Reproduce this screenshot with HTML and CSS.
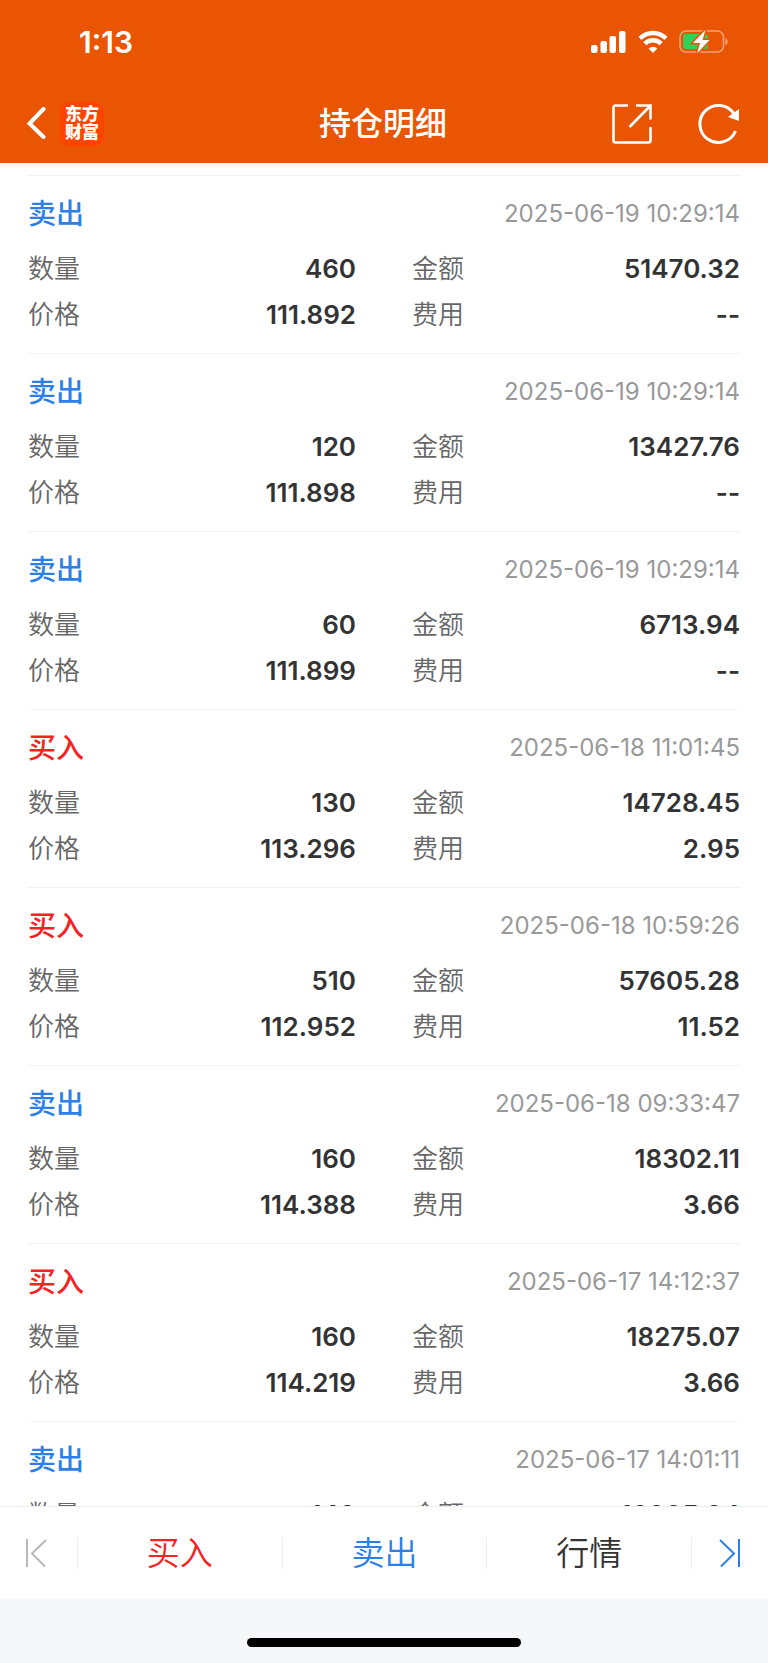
FILE: index.html
```html
<!DOCTYPE html>
<html lang="zh-CN">
<head>
    <meta charset="UTF-8">
    <meta name="viewport" content="width=device-width, initial-scale=1.0">
    <title>持仓明细</title>
    <link rel="stylesheet" href="styles.css">
</head>
<body>

    <header>
        <div class="status-bar">
            <span class="time">1:13</span>
            <div class="status-icons">
                <svg width="36" height="24" viewBox="0 0 36 24" fill="#fff">
                    <rect x="0" y="15" width="6.500" height="8" rx="2"/>
                    <rect x="9.500" y="11" width="6.500" height="12" rx="2"/>
                    <rect x="18.500" y="6" width="6.500" height="17" rx="2"/>
                    <rect x="28" y="1" width="6.500" height="22" rx="2"/>
                </svg>
                <svg width="30" height="24" viewBox="0 0 30 24" fill="none" stroke="#fff" stroke-width="4.4">
                    <path d="M2 8.4a18.4 18.4 0 0 1 26 0"/>
                    <path d="M6.8 13.6a11.6 11.6 0 0 1 16.4 0"/>
                    <path d="M15 23l-4.4-4.5a6.2 6.2 0 0 1 8.8 0z" fill="#fff" stroke="none"/>
                </svg>
                <svg width="50" height="26" viewBox="0 0 50 26">
                    <rect x="1" y="2" width="43.500" height="21" rx="6" fill="none" stroke="#fff" stroke-opacity=".45" stroke-width="1.6"/>
                    <path d="M46.500 9c2.800 1.200 2.800 6 0 7.200z" fill="#fff" fill-opacity=".5"/>
                    <rect x="4" y="5" width="25" height="15" rx="3" fill="#30d158"/>
                    <path d="M26.500 .8L14 14h7L18 24.400 30.500 11h-7z" fill="#fff" stroke="#ea5504" stroke-width="3" paint-order="stroke"/>
                </svg>
            </div>
        </div>
        <nav class="nav-bar">
            <div class="nav-side">
                <button type="button" class="icon-btn" aria-label="返回">
                    <svg width="20" height="34" viewBox="0 0 20 34" fill="none" stroke="#fff" stroke-width="4" stroke-linecap="round">
                        <path d="M17.500 2L3.500 16.500 17.500 30"/>
                    </svg>
                </button>
                <a href="#" class="logo">东方<br>财富</a>
            </div>
            <h1>持仓明细</h1>
            <div class="nav-side nav-right">
                <button type="button" class="icon-btn" aria-label="分享">
                    <svg width="40" height="40" viewBox="0 0 40 40" fill="none" stroke="#fff" stroke-width="2.600">
                        <path d="M16 1.500H3.500a2 2 0 0 0-2 2v33a2 2 0 0 0 2 2h33a2 2 0 0 0 2-2V23"/>
                        <path d="M24 1.500h14.500V15.500M38 2L17.500 23"/>
                    </svg>
                </button>
                <button type="button" class="icon-btn" aria-label="刷新">
                    <svg width="42" height="42" viewBox="0 0 42 42" fill="none" stroke="#fff" stroke-width="3">
                        <path d="M36 11A18.500 18.500 0 1 0 37.500 28"/>
                        <path d="M41 6v12l-11-4z" fill="#fff" stroke="none"/>
                    </svg>
                </button>
            </div>
        </nav>
    </header>

    <main id="tradeList" class="trade-list"></main>

    <footer>
        <div class="toolbar">
            <button type="button" class="side side-prev" aria-label="上一个">
                <svg width="24" height="30" viewBox="0 0 24 30" fill="none" stroke="#b8b8b8" stroke-width="2">
                    <path d="M3 1v28M22 2L8 15.500 21 28.500"/>
                </svg>
            </button>
            <button type="button" class="buy">买入</button>
            <button type="button" class="sell">卖出</button>
            <button type="button">行情</button>
            <button type="button" class="side" aria-label="下一个">
                <svg width="24" height="30" viewBox="0 0 24 30" fill="none" stroke="#2b7fe8" stroke-width="2">
                    <path d="M21 1v28M2 2l14 13.500L3 28.500"/>
                </svg>
            </button>
        </div>
        <div class="home-area">
            <div class="home-indicator"></div>
        </div>
    </footer>

    <script>
        const trades = [
            { type: 'sell', time: '2025-06-19 10:29:14', count: '460', amount: '51470.32', price: '111.892', fee: '--' },
            { type: 'sell', time: '2025-06-19 10:29:14', count: '120', amount: '13427.76', price: '111.898', fee: '--' },
            { type: 'sell', time: '2025-06-19 10:29:14', count: '60', amount: '6713.94', price: '111.899', fee: '--' },
            { type: 'buy', time: '2025-06-18 11:01:45', count: '130', amount: '14728.45', price: '113.296', fee: '2.95' },
            { type: 'buy', time: '2025-06-18 10:59:26', count: '510', amount: '57605.28', price: '112.952', fee: '11.52' },
            { type: 'sell', time: '2025-06-18 09:33:47', count: '160', amount: '18302.11', price: '114.388', fee: '3.66' },
            { type: 'buy', time: '2025-06-17 14:12:37', count: '160', amount: '18275.07', price: '114.219', fee: '3.66' },
            { type: 'sell', time: '2025-06-17 14:01:11', count: '140', amount: '16005.04', price: '114.322', fee: '3.20' }
        ];

        // Add every trade to the list
        document.getElementById('tradeList').innerHTML = trades.map(trade => `
            <section class="trade">
                <div class="trade-head">
                    <h2 class="${trade.type}">${trade.type === 'buy' ? '买入' : '卖出'}</h2>
                    <time>${trade.time}</time>
                </div>
                <dl>
                    <div><dt>数量</dt><dd>${trade.count}</dd></div>
                    <div><dt>金额</dt><dd>${trade.amount}</dd></div>
                    <div><dt>价格</dt><dd>${trade.price}</dd></div>
                    <div><dt>费用</dt><dd>${trade.fee}</dd></div>
                </dl>
            </section>
        `).join('');
    </script>
</body>
</html>
```
FILE: styles.css
```css
/* Reset some default styles */
body, h1, h2, dl, dt, dd, button {
    margin: 0;
    padding: 0;
}

* {
    box-sizing: border-box;
}

body {
    display: flex;
    flex-direction: column;
    height: 100vh;
    font-family: Inter, "Noto Sans CJK SC", sans-serif;
    background-color: #fff;
    color: #333;
}

button {
    border: none;
    background: none;
    color: inherit;
    font-family: inherit;
    cursor: pointer;
}

svg {
    display: block;
}

header {
    background-color: #ea5504;
    color: #fff;
}

.status-bar {
    display: flex;
    justify-content: space-between;
    align-items: center;
    height: 84px;
    padding: 0 39px 0 79px;
}

.time {
    font-size: 30px;
    font-weight: 600;
}

.status-icons {
    display: flex;
    align-items: center;
    gap: 11px;
}

.nav-bar {
    display: flex;
    align-items: center;
    height: 79px;
    padding: 0 28px 0 26px;
}

.nav-bar h1 {
    padding-bottom: 5px;
    font-size: 32px;
    font-weight: 500;
}

.nav-side {
    display: flex;
    flex: 1;
    align-items: center;
    gap: 14px;
}

.nav-right {
    justify-content: flex-end;
    gap: 46px;
}

.logo {
    width: 44px;
    padding: 3px 0 5px;
    border-radius: 9px;
    background-color: #ff4400;
    color: #fff;
    font-size: 17px;
    font-weight: 900;
    line-height: 18px;
    text-align: center;
    text-decoration: none;
}

.trade-list {
    flex: 1;
    min-height: 0;
    overflow: hidden;
    padding: 12px 28px 0;
}

.trade {
    padding: 13px 0 15px;
    border-top: 1px solid #f2f2f2;
}

.trade-head {
    display: flex;
    justify-content: space-between;
    align-items: center;
    height: 48px;
    margin-bottom: 9px;
}

.trade-head h2 {
    padding-bottom: 3px;
    font-size: 28px;
    font-weight: 500;
}

.trade-head time {
    color: #999;
    font-size: 24px;
}

.buy {
    color: #f52222;
}

.sell {
    color: #2b7fe8;
}

.trade dl {
    display: grid;
    grid-template-columns: 1fr 1fr;
    column-gap: 56px;
    font-size: 26px;
    line-height: 46px;
}

.trade dl div {
    display: flex;
    justify-content: space-between;
}

.trade dt {
    color: #666;
    font-weight: 350;
}

.trade dd {
    font-weight: 600;
}

.toolbar {
    display: flex;
    align-items: center;
    height: 93px;
    border-top: 1px solid #eee;
}

.toolbar button {
    display: flex;
    flex: 1;
    justify-content: center;
    align-items: center;
    height: 32px;
    padding-bottom: 4px;
    font-size: 33px;
    font-weight: 350;
}

.toolbar button + button {
    border-left: 1px solid #eee;
}

.toolbar .side {
    flex: 0 0 77px;
    padding-bottom: 0;
}

.toolbar .side-prev {
    padding-right: 5px;
}

.home-area {
    display: flex;
    justify-content: center;
    height: 64px;
    padding-top: 39px;
    background-color: #f6f7f9;
}

.home-indicator {
    width: 274px;
    height: 9px;
    border-radius: 5px;
    background-color: #000;
}
```
